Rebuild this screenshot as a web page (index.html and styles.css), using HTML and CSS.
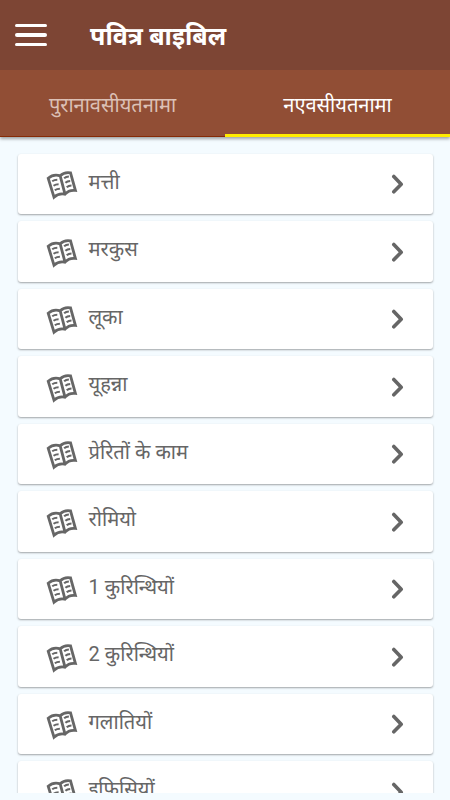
FILE: index.html
```
<!doctype html>
<html lang="hi">
  <head>
    <title>पवित्र बाइबिल</title>
    <meta charset="UTF-8">
    <meta name="viewport" content="width=device-width, initial-scale=1">
    <link rel="stylesheet" href="styles.css">
  </head>
  <body>
<header>
  <button class="menu" aria-label="Menu"><span></span><span></span><span></span></button>
  <h1>पवित्र बाइबिल</h1>
</header>
<nav>
  <a class="old">पुरानावसीयतनामा</a>
  <a class="new active">नएवसीयतनामा</a>
</nav>
<svg class="defs">
  <symbol id="book" viewBox="0 0 32 32">
    <g fill="none" stroke="#666" stroke-linecap="round" stroke-linejoin="round">
      <path stroke-width="2.8" stroke-linejoin="miter" d="M2.2 10.2Q7.5 5.6 14.2 7.8Q18 3.8 24.5 4.8L29.4 22.4Q23 21.6 19 26.2Q12.7 24.8 8 29.2ZM14.2 7.8L19 26.2"/>
      <path stroke-width="2" stroke-linecap="butt" d="M6.2 13.2Q8.3 11.7 11.3 11.7M7.5 17.7Q9.6 16.2 12.6 16.2M8.8 22.2Q10.9 20.7 13.9 20.7M18.1 10.3Q20 8.5 22.9 8.4M19.4 14.8Q21.3 13 24.2 12.9M20.7 19.3Q22.6 17.5 25.5 17.4"/>
    </g>
  </symbol>
  <symbol id="arrow" viewBox="0 0 14 20">
    <path fill="none" stroke="#666" stroke-width="3.6" stroke-linecap="round" stroke-linejoin="round" d="M2.8 2.5L10.2 10.2L2.8 17.8"/>
  </symbol>
</svg>
<main>
  <ul>
    <li><svg class="book"><use href="#book"/></svg><span>मत्ती</span><svg class="arrow"><use href="#arrow"/></svg></li>
    <li><svg class="book"><use href="#book"/></svg><span>मरकुस</span><svg class="arrow"><use href="#arrow"/></svg></li>
    <li><svg class="book"><use href="#book"/></svg><span>लूका</span><svg class="arrow"><use href="#arrow"/></svg></li>
    <li><svg class="book"><use href="#book"/></svg><span>यूहन्ना</span><svg class="arrow"><use href="#arrow"/></svg></li>
    <li><svg class="book"><use href="#book"/></svg><span>प्रेरितों के काम</span><svg class="arrow"><use href="#arrow"/></svg></li>
    <li><svg class="book"><use href="#book"/></svg><span>रोमियो</span><svg class="arrow"><use href="#arrow"/></svg></li>
    <li><svg class="book"><use href="#book"/></svg><span>1 कुरिन्थियों</span><svg class="arrow"><use href="#arrow"/></svg></li>
    <li><svg class="book"><use href="#book"/></svg><span>2 कुरिन्थियों</span><svg class="arrow"><use href="#arrow"/></svg></li>
    <li><svg class="book"><use href="#book"/></svg><span>गलातियों</span><svg class="arrow"><use href="#arrow"/></svg></li>
    <li><svg class="book"><use href="#book"/></svg><span>इफिसियों</span><svg class="arrow"><use href="#arrow"/></svg></li>
  </ul>
</main>
  </body>
</html>
```
FILE: styles.css
```
* {
  box-sizing: border-box;
}
body {
  margin: 0;
  height: 800px;
  overflow: hidden;
  display: flex;
  flex-direction: column;
  background: #f4fbff;
  font-family: Roboto, "Noto Sans", sans-serif;
}
header {
  height: 70px;
  flex: none;
  padding: 0 15px;
  display: flex;
  align-items: center;
  gap: 43px;
  background: #7d4534;
  color: white;
}
h1 {
  margin: 4px 0 0;
  font-size: 25px;
  line-height: 32px;
  font-weight: 700;
}
.menu {
  width: 32px;
  padding: 0;
  border: 0;
  background: none;
  display: flex;
  flex-direction: column;
  gap: 6px;
}
.menu span {
  height: 3.5px;
  border-radius: 2px;
  background: white;
}
nav {
  height: 67px;
  flex: none;
  display: flex;
  background: #914e35;
  box-shadow: 0 2px 3px rgba(0, 0, 0, 0.35);
  clip-path: inset(0 0 -8px);
}
nav a {
  flex: 1 1 0;
  padding-top: 20px;
  text-align: center;
  font-size: 20px;
  line-height: 30px;
  color: #dcc0b6;
  border-bottom: 1px solid #862b06;
}
nav .active {
  color: white;
  border-bottom: 3px solid #ffec00;
}
.defs {
  display: none;
}
main {
  height: 656px;
  overflow: hidden;
}
ul {
  margin: 0;
  padding: 16.8px 17.5px 0;
  list-style: none;
  display: flex;
  flex-direction: column;
  gap: 7px;
}
li {
  height: 60.5px;
  flex: none;
  padding: 0 28px;
  display: flex;
  align-items: center;
  border-radius: 3px;
  background: white;
  box-shadow: 0 1px 2px rgba(0, 0, 0, 0.35);
  color: #666;
  font-size: 20.1px;
  line-height: 30px;
}
li span {
  flex: 1;
  margin-left: 11px;
  padding-bottom: 5px;
}
.book {
  width: 32px;
  height: 32px;
}
.arrow {
  width: 14px;
  height: 20px;
}
```
